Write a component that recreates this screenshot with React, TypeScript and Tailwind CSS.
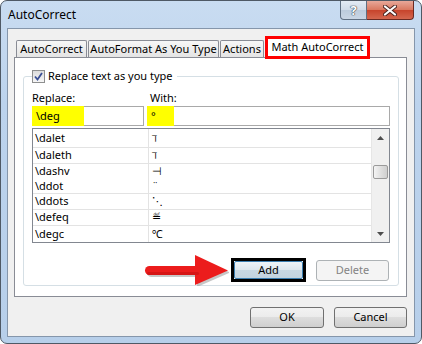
import React from 'react';

type Row = { key: string; sym: string; cls: string };

const rows: Row[] = [
  { key: '\\dalet', sym: 'ℸ', cls: 'h-[19px] border-b border-[#e3e3e3]' },
  { key: '\\daleth', sym: 'ℸ', cls: 'h-[16px] border-b border-[#e3e3e3]' },
  { key: '\\dashv', sym: '⊣', cls: 'h-[15px]' },
  { key: '\\ddot', sym: '¨', cls: 'h-[15px] border-b border-[#e3e3e3]' },
  { key: '\\ddots', sym: '⋱', cls: 'h-[16px] border-b border-[#e3e3e3]' },
  { key: '\\defeq', sym: '≝', cls: 'h-[16px] border-b border-[#e3e3e3]' },
  { key: '\\degc', sym: '℃', cls: 'h-[16px]' },
];

const tabCls =
  'flex h-[17px] items-center justify-center rounded-t-[2px] border border-b-0 border-[#898c95] bg-[linear-gradient(#f7f7f7,#e4e4e4)] text-[11px] text-black';

const button =
  'flex items-center justify-center rounded-[3px] border border-[#707070] bg-[linear-gradient(#f2f2f2_0%,#ebebeb_50%,#dddddd_50%,#cfcfcf_100%)] text-[11px] text-black';

function Triangle({ down }: { down?: boolean }) {
  return (
    <svg width="7" height="4" viewBox="0 0 7 4">
      <polygon points={down ? '0,0 7,0 3.5,4' : '0,4 7,4 3.5,0'} fill="#4d4d4d" />
    </svg>
  );
}

function Arrow() {
  return (
    <svg width="86" height="32" viewBox="0 0 86 32" className="-my-[4px]">
      <g transform="translate(2,2)" fill="#9a9a9a" opacity="0.55">
        <rect x="2" y="12" width="56" height="9" rx="4.5" />
        <polygon points="52,1 85,16.5 52,31" />
      </g>
      <rect x="2" y="12" width="56" height="9" rx="4.5" fill="#ec1c1c" />
      <polygon points="52,1 85,16.5 52,31" fill="#ec1c1c" />
      <rect x="4" y="18" width="52" height="3" rx="1.5" fill="#c81010" opacity="0.6" />
    </svg>
  );
}

export default function App() {
  return (
    <div className="h-[344px] w-[422px] bg-white font-['Noto_Sans','DejaVu_Sans',sans-serif]">
      <div className="flex h-[344px] w-[422px] flex-col rounded-[7px] border border-[#4f5965] bg-[linear-gradient(#c9dcf1,#bcd3ed_30%,#b7cfea)] px-[6px] pb-[6px]">
        {/* title bar */}
        <div className="-mx-[6px] flex h-[27px] items-start">
          <div className="pl-[7px] pt-[6px] text-[12px] leading-[16px] text-black">AutoCorrect</div>
          <div className="ml-auto mr-[7px] flex">
            <div className="flex h-[19px] w-[27px] items-center justify-center rounded-bl-[4px] border border-t-0 border-[#5f6f82] bg-[linear-gradient(#e3ebf4,#d0dbe8_50%,#bccbdc_50%,#c9d6e5)] text-[13px] font-bold leading-none text-white [text-shadow:0_0_1px_#34404d,0_0_1px_#34404d,0_0_1px_#34404d]">
              ?
            </div>
            <div className="flex h-[19px] w-[47px] items-center justify-center rounded-br-[4px] border border-l-0 border-t-0 border-[#6b2a22] bg-[linear-gradient(#e8a899,#d9775f_50%,#c7432b_50%,#d4674f)]">
              <svg width="14" height="11" viewBox="0 0 14 11">
                <path d="M2 1.5 L12 9.5 M12 1.5 L2 9.5" stroke="#4a2420" strokeWidth="4" strokeLinecap="round" />
                <path d="M2 1.5 L12 9.5 M12 1.5 L2 9.5" stroke="#ffffff" strokeWidth="2.2" strokeLinecap="round" />
              </svg>
            </div>
          </div>
        </div>

        {/* client */}
        <div className="flex flex-1 flex-col border border-[#8596ab] bg-[#f0f0f0]">
          <div className="ml-[6px] mr-[7px] mt-[7px] flex flex-col">
            <div className="relative z-10 flex h-[21px] items-end gap-[1px] pl-[2px]">
              <div className={`${tabCls} w-[71px]`}>AutoCorrect</div>
              <div className={`${tabCls} w-[131px]`}>AutoFormat As You Type</div>
              <div className={`${tabCls} w-[44px]`}>Actions</div>
              <div className="-mb-[2px] flex h-[23px] w-[105px] items-center justify-center border-[3px] border-[#ff0000] bg-white text-[11px] text-black">
                Math AutoCorrect
              </div>
            </div>
            <div className="flex h-[240px] flex-col border border-[#898c95] bg-white">
              <fieldset className="mb-[10px] ml-[8px] mr-[7px] mt-[11px] flex-1 rounded-[3px] border border-[#d5dfe5] px-[8px]">
                <legend className="flex items-center gap-[3px] pr-[4px]">
                  <span className="flex h-[13px] w-[13px] items-center justify-center border border-[#8e8f8f] bg-[linear-gradient(#dcdcdc,#f6f6f6)]">
                    <svg width="9" height="9" viewBox="0 0 9 9">
                      <path d="M1 4.5 L3.5 7.5 L8 1" stroke="#3a4f95" strokeWidth="1.8" fill="none" />
                    </svg>
                  </span>
                  <span className="text-[11px] leading-[14px] text-black">Replace text as you type</span>
                </legend>
                <div className="mt-[7px] flex h-[16px] text-[11px] leading-[16px] text-black">
                  <span className="w-[118px]">Replace:</span>
                  <span>With:</span>
                </div>
                <div className="flex h-[20px] gap-[3px] text-[11px] text-black">
                  <div className="flex w-[112px] border border-[#a9a9a9] bg-white">
                    <span className="-my-[1px] -ml-[1px] flex w-[52px] items-center bg-[#ffff00] pl-[4px]">\deg</span>
                  </div>
                  <div className="flex flex-1 border border-[#a9a9a9] bg-white">
                    <span className="-my-[1px] -ml-[1px] flex w-[27px] items-center bg-[#ffff00] pl-[4px]">°</span>
                  </div>
                </div>
                <div className="mt-[2px] flex h-[115px] border border-[#828790] bg-white text-[11px] text-black">
                  <div className="flex flex-1 flex-col">
                    {rows.map((r) => (
                      <div key={r.key} className={`flex ${r.cls}`}>
                        <div className="flex w-[116px] items-center border-r border-[#e3e3e3] pl-[2px]">{r.key}</div>
                        <div className="flex items-center pl-[3px]">{r.sym}</div>
                      </div>
                    ))}
                  </div>
                  <div className="flex w-[18px] flex-col border-l border-[#e6e6e6] bg-[#f0f0f0]">
                    <div className="flex h-[17px] items-center justify-center">
                      <Triangle />
                    </div>
                    <div className="mx-[1px] mt-[19px] h-[14px] rounded-[2px] border border-[#9a9a9a] bg-[linear-gradient(90deg,#f4f4f4,#dedede_55%,#cfcfcf)]" />
                    <div className="flex-1" />
                    <div className="flex h-[17px] items-center justify-center">
                      <Triangle down />
                    </div>
                  </div>
                </div>
                <div className="mt-[15px] flex items-center justify-end pr-[1px]">
                  <Arrow />
                  <div className="ml-[2px] h-[24px] w-[75px] border-[3px] border-black">
                    <div className="flex h-full w-full items-center justify-center rounded-[2px] border border-[#3c7fb1] bg-[linear-gradient(#eef4f8,#dde7ee_50%,#c8d8e3_50%,#c3d4e0)] text-[11px] text-black">
                      Add
                    </div>
                  </div>
                  <div className="ml-[10px] flex h-[21px] w-[73px] items-center justify-center rounded-[3px] border border-[#adb2b5] bg-[#f4f4f4] text-[11px] text-[#838383]">
                    Delete
                  </div>
                </div>
              </fieldset>
            </div>
            <div className="mt-[10px] flex justify-end gap-[10px]">
              <div className={`${button} h-[21px] w-[74px]`}>OK</div>
              <div className={`${button} h-[21px] w-[73px]`}>Cancel</div>
            </div>
          </div>
        </div>
      </div>
    </div>
  );
}
